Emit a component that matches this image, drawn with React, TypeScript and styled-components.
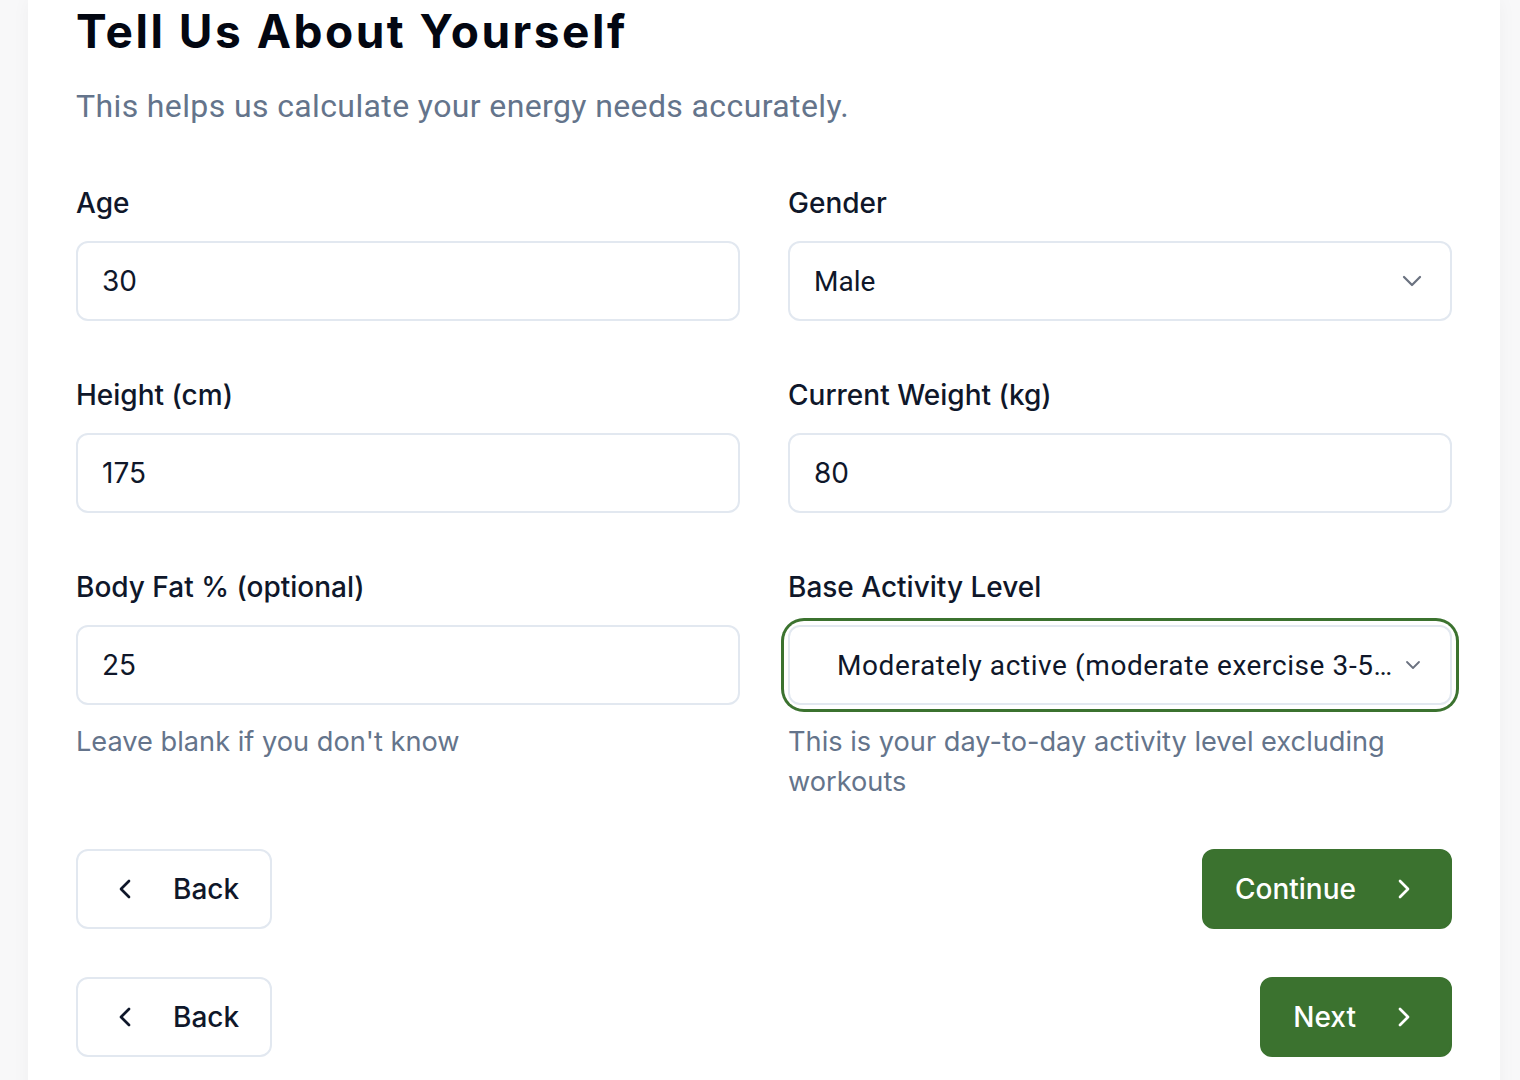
import React from "react";
import styled, { createGlobalStyle, css } from "styled-components";

const Global = createGlobalStyle`
  * { box-sizing: border-box; }
  html, body { margin: 0; padding: 0; }
  body {
    background: #f8f8f9;
    font-family: Inter, "Noto Sans", sans-serif;
    color: #0f172a;
    overflow: hidden;
  }
`;

const green = "#3b722f";

const Page = styled.div`
  padding: 0 20px 40px 28px;
`;

const Card = styled.main`
  background: #ffffff;
  padding: 2px 48px 48px 48px;
  box-shadow: 0 0 18px rgba(0, 0, 0, 0.04);
  min-height: 1080px;
`;

const Title = styled.h1`
  margin: 0;
  font-family: Inter, sans-serif;
  font-weight: 700;
  font-size: 46px;
  line-height: 58px;
  color: #030712;
  letter-spacing: 2.5px;
`;

const Subtitle = styled.p`
  margin: 26px 0 0 0;
  font-family: Roboto, sans-serif;
  font-size: 32px;
  line-height: 40px;
  letter-spacing: 0.38px;
  color: #64748b;
`;

const Grid = styled.div`
  margin-top: 57px;
  display: grid;
  grid-template-columns: minmax(0, 1fr) minmax(0, 1fr);
  column-gap: 48px;
  row-gap: 54px;
`;

const Field = styled.div`
  display: flex;
  flex-direction: column;
  min-width: 0;
`;

const Label = styled.label`
  font-size: 28px;
  font-weight: 500;
  line-height: 40px;
  color: #0f172a;
  margin-bottom: 18px;
`;

const boxBase = css`
  height: 80px;
  border: 2px solid #e2e8f0;
  border-radius: 12px;
  background: #fff;
  display: flex;
  align-items: center;
`;

const Input = styled.div`
  ${boxBase};
  padding: 0 24px;
  font-size: 28px;
  color: #0f172a;
`;

const Ring = styled.div<{ $focused?: boolean }>`
  border-radius: 16px;
  ${(p) =>
    p.$focused &&
    css`
      box-shadow: 0 0 0 4px #ffffff, 0 0 0 7px ${green};
    `}
`;

const Select = styled.div<{ $inset?: number; $end?: number }>`
  ${boxBase};
  padding: 0 ${(p) => p.$end ?? 26}px 0 ${(p) => p.$inset ?? 24}px;
  justify-content: space-between;
  gap: 2px;
  font-family: Roboto, sans-serif;
  font-size: 28px;
  color: #0f172a;
`;

const SelectText = styled.span<{ $spacing?: number }>`
  white-space: nowrap;
  letter-spacing: ${(p) => p.$spacing ?? 0}px;
`;

const Helper = styled.p`
  margin: 17px 0 0 0;
  font-size: 27.2px;
  line-height: 40px;
  color: #64748b;
`;

const Actions = styled.div`
  margin-top: 47px;
  display: flex;
  flex-direction: column;
  gap: 48px;
`;

const ActionRow = styled.div`
  display: flex;
  justify-content: space-between;
  align-items: center;
`;

const Button = styled.button<{ $primary?: boolean }>`
  height: 80px;
  display: inline-flex;
  align-items: center;
  gap: 32px;
  padding: ${(p) => (p.$primary ? "0 30px 0 31px" : "0 31px")};
  border-radius: 12px;
  font-family: Inter, sans-serif;
  font-size: 28px;
  font-weight: 500;
  cursor: pointer;
  ${(p) =>
    p.$primary
      ? css`
          background: ${green};
          color: #ffffff;
          border: 2px solid ${green};
        `
      : css`
          background: #ffffff;
          color: #0f172a;
          border: 2px solid #e2e8f0;
        `}
`;

const Chevron = ({ dir, size = 32, color = "currentColor", stroke = 2 }: { dir: "left" | "right" | "down"; size?: number; color?: string; stroke?: number }) => {
  const d = dir === "left" ? "m15 18-6-6 6-6" : dir === "right" ? "m9 18 6-6-6-6" : "m6 9 6 6 6-6";
  return (
    <svg width={size} height={size} viewBox="0 0 24 24" fill="none" stroke={color} strokeWidth={stroke} strokeLinecap="round" strokeLinejoin="round" style={{ flexShrink: 0 }}>
      <path d={d} />
    </svg>
  );
};

export default function App() {
  return (
    <>
      <Global />
      <Page>
        <Card>
          <Title>Tell Us About Yourself</Title>
          <Subtitle>This helps us calculate your energy needs accurately.</Subtitle>
          <Grid>
            <Field>
              <Label>Age</Label>
              <Input>30</Input>
            </Field>
            <Field>
              <Label>Gender</Label>
              <Select $end={22}>
                <SelectText>Male</SelectText>
                <Chevron dir="down" size={32} color="#6b7280" stroke={1.7} />
              </Select>
            </Field>
            <Field>
              <Label>Height (cm)</Label>
              <Input>175</Input>
            </Field>
            <Field>
              <Label>Current Weight (kg)</Label>
              <Input>80</Input>
            </Field>
            <Field>
              <Label>Body Fat % (optional)</Label>
              <Input>25</Input>
              <Helper>Leave blank if you don't know</Helper>
            </Field>
            <Field>
              <Label>Base Activity Level</Label>
              <Ring $focused>
                <Select $inset={47} $end={25}>
                  <SelectText $spacing={0.6}>Moderately active (moderate exercise 3-5…</SelectText>
                  <Chevron dir="down" size={24} color="#6b7280" stroke={1.8} />
                </Select>
              </Ring>
              <Helper>This is your day-to-day activity level excluding workouts</Helper>
            </Field>
          </Grid>
          <Actions>
            <ActionRow>
              <Button>
                <Chevron dir="left" />
                Back
              </Button>
              <Button $primary>
                Continue
                <Chevron dir="right" />
              </Button>
            </ActionRow>
            <ActionRow>
              <Button>
                <Chevron dir="left" />
                Back
              </Button>
              <Button $primary>
                Next
                <Chevron dir="right" />
              </Button>
            </ActionRow>
          </Actions>
        </Card>
      </Page>
    </>
  );
}
